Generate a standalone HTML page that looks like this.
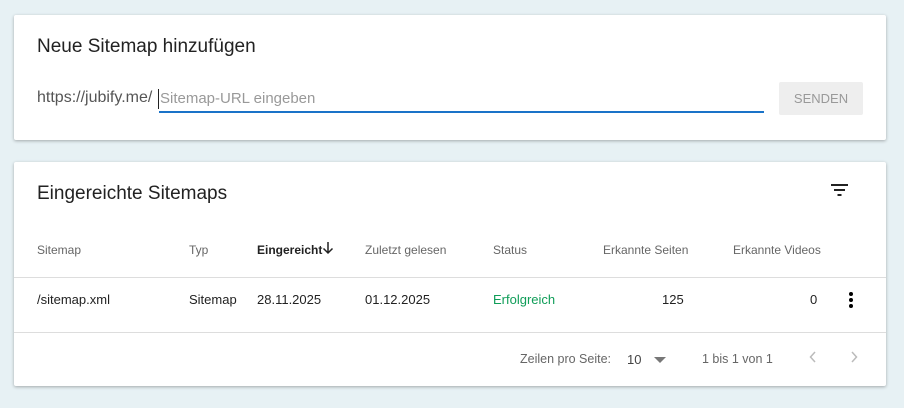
<!DOCTYPE html><html><head><style>
body{margin:0;width:904px;height:408px;background:#e7f1f4;font-family:"Liberation Sans",sans-serif;position:relative;overflow:hidden}
.card{position:absolute;left:14px;width:872px;background:#fff;border-radius:2px;box-shadow:0 1px 3px rgba(0,0,0,.3)}
.a{position:absolute;white-space:nowrap}
.h{font-size:12px;color:#666}
.d{font-size:13px;color:#222}
</style></head><body>
<div class="card" style="top:15px;height:125px">
<div class="a" style="left:23px;top:21px;font-size:19px;color:#222">Neue Sitemap hinzufügen</div>
<div class="a" style="left:23px;top:74px;font-size:16px;color:#555">https://jubify.me/</div>
<div class="a" style="left:144px;top:74px;width:1px;height:20px;background:#222"></div>
<div class="a" style="left:146px;top:75px;font-size:15px;color:#999">Sitemap-URL eingeben</div>
<div class="a" style="left:145px;top:96px;width:605px;height:2px;background:#1a73c8"></div>
<div class="a" style="left:765px;top:67px;width:84px;height:33px;background:#eee;border-radius:2px;color:#999;font-size:13px;text-align:center;line-height:33px">SENDEN</div>
</div>
<div class="card" style="top:162px;height:224px">
<div class="a" style="left:23px;top:21px;font-size:19px;color:#222">Eingereichte Sitemaps</div>
<svg class="a" style="left:817px;top:21px" width="18" height="14"><path d="M0 2h17M3 7h11M6.5 12h4" stroke="#222" stroke-width="2"/></svg>
<div class="a h" style="left:23px;top:81px">Sitemap</div>
<div class="a h" style="left:175px;top:81px">Typ</div>
<div class="a" style="left:243px;top:81px;font-size:12px;color:#222;font-weight:bold">Eingereicht</div>
<svg class="a" style="left:308px;top:79px" width="12" height="14"><path d="M6 1v11M1.5 7.5L6 12l4.5-4.5" stroke="#222" stroke-width="1.5" fill="none"/></svg>
<div class="a h" style="left:351px;top:81px">Zuletzt gelesen</div>
<div class="a h" style="left:479px;top:81px">Status</div>
<div class="a h" style="left:589px;top:81px">Erkannte Seiten</div>
<div class="a h" style="left:719px;top:81px">Erkannte Videos</div>
<div class="a" style="left:0;top:115px;width:872px;height:1px;background:#ddd"></div>
<div class="a d" style="left:23px;top:130px">/sitemap.xml</div>
<div class="a d" style="left:175px;top:130px">Sitemap</div>
<div class="a d" style="left:243px;top:130px">28.11.2025</div>
<div class="a d" style="left:351px;top:130px">01.12.2025</div>
<div class="a" style="left:479px;top:130px;font-size:13px;color:#0f9d58">Erfolgreich</div>
<div class="a d" style="left:648px;top:130px">125</div>
<div class="a d" style="left:796px;top:130px">0</div>
<svg class="a" style="left:833px;top:129px" width="8" height="18"><circle cx="4" cy="3" r="2"/><circle cx="4" cy="9" r="2"/><circle cx="4" cy="15" r="2"/></svg>
<div class="a" style="left:0;top:170px;width:872px;height:1px;background:#ddd"></div>
<div class="a h" style="left:506px;top:190px;font-size:12.5px">Zeilen pro Seite:</div>
<div class="a" style="left:613px;top:190px;font-size:13px;color:#444">10</div>
<svg class="a" style="left:640px;top:195px" width="12" height="6"><path d="M0 0h12L6 6z" fill="#777"/></svg>
<div class="a h" style="left:688px;top:190px;font-size:12.5px">1 bis 1 von 1</div>
<svg class="a" style="left:795px;top:189px" width="8" height="12"><path d="M6 1L1.5 6L6 11" stroke="#bbb" stroke-width="1.5" fill="none"/></svg>
<svg class="a" style="left:836px;top:189px" width="8" height="12"><path d="M2 1L6.5 6L2 11" stroke="#bbb" stroke-width="1.5" fill="none"/></svg>
</div>
</body></html>
